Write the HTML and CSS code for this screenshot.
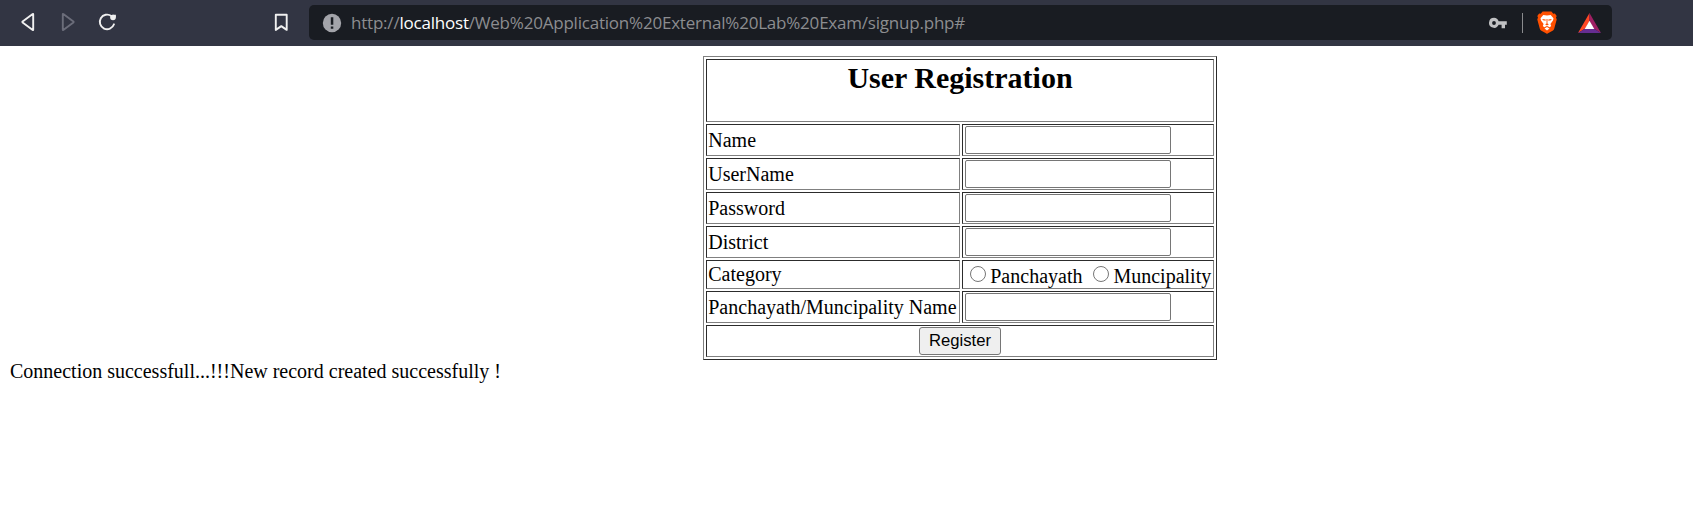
FILE: index.html
```html
<!DOCTYPE html>
<html lang="en">
<head>
<meta charset="utf-8">
<title>User Registration</title>
<link rel="stylesheet" href="styles.css">
</head>
<body>
<header class="toolbar">
  <svg class="ico nav-back" width="24" height="24" viewBox="0 0 24 24"><path d="M17.2 5.3v15.4q0 .5-.5.2L6.600 13.400q-.5-.4 0-.8L16.700 5.100q.5-.3.5.2z"/></svg>
  <svg class="ico nav-forward" width="24" height="24" viewBox="0 0 24 24"><path d="M6.800 5.300v15.400q0 .5.5.2l10.100-7.500q.5-.4 0-.8L7.300 5.100q-.5-.3-.5.2z"/></svg>
  <svg class="ico nav-reload" width="24" height="24" viewBox="0 0 24 24"><path d="M19 15.300A7.300 7.300 0 1 1 16.400 7"/><circle class="fill" cx="18" cy="8.500" r="2.800"/><path class="fill" d="M17.300 5.700h3.600v3z"/></svg>
  <svg class="ico bookmark" width="24" height="24" viewBox="0 0 24 24"><path d="M6.800 5.700h10.900v15.200l-5.400-3.800-5.500 3.800z"/></svg>
  <div class="address">
    <svg class="info" width="20" height="20" viewBox="0 0 20 20"><circle cx="10" cy="10" r="9.2"/><path d="M8.800 4.300h2.500v7.400H8.800zM8.800 13.400h2.500v2.400H8.800z"/></svg>
    <div class="url"><span class="scheme">http://</span><span class="host">localhost</span><span class="path">/Web%20Application%20External%20Lab%20Exam/signup.php#</span></div>
    <svg class="key" width="18" height="12" viewBox="0 0 18 12"><path fill-rule="evenodd" d="M5 .8a5 5 0 1 0 4.600 7h3v3.500H16V7.800h1.800V4.300H9.600A5 5 0 0 0 5 .8zM5 4.100a1.900 1.900 0 1 1 0 3.800 1.900 1.900 0 0 1 0-3.800z"/></svg>
    <span class="divider"></span>
    <svg class="lion" width="20" height="23" viewBox="0 0 20 23"><path fill="#ff5000" d="M5.600.5h8.800l1.900 2.200 1.600-.3 1.800 2.500-.7 1.700.7 2-2.500 9.200q-.3 1-1.200 1.700L10.600 22.600q-.6.4-1.200 0L4 19.500q-.9-.7-1.200-1.700L.3 8.600l.7-2-.7-1.700 1.800-2.500 1.600.3z"/><path fill="#fff" d="M6.300 4l3.700.6 3.700-.6 2.800 3.200-.5 2.300-2.600 3.600.8 2-1.500 1.200-2-1.100-.7-.2-.7.200-2 1.100-1.500-1.200.8-2L4 9.500l-.5-2.300zM7.500 17.500L10 16l2.500 1.500L10 19.500z"/><path fill="#ff5000" d="M5 8l3.600.6.3 1H6.600zM15 8l-3.600.6-.3 1h2.300zM9.500 8h1l-.1 4.600 1.500.6L10 14.500l-1.900-1.300 1.500-.6z"/></svg>
    <svg class="bat" width="23" height="20" viewBox="0 0 23 20"><path fill="#ff4724" d="M11.500 0L0 20l7.300-4.500 4.200-7.300z"/><path fill="#9e1f63" d="M11.500 0L23 20l-7.300-4.500-4.200-7.300z"/><path fill="#662d91" d="M0 20h23l-7.300-4.500H7.300z"/><path fill="#fff" d="M11.500 7.800l4.800 8.200H6.700z"/></svg>
  </div>
</header>
<main class="page">
  <form class="form">
    <div class="cell title"><h2 class="heading">User Registration</h2></div>
    <label class="cell">Name</label><div class="cell field"><input class="text" type="text"></div>
    <label class="cell">UserName</label><div class="cell field"><input class="text" type="text"></div>
    <label class="cell">Password</label><div class="cell field"><input class="text" type="password"></div>
    <label class="cell">District</label><div class="cell field"><input class="text" type="text"></div>
    <label class="cell">Category</label>
    <div class="cell choices"><input class="radio" type="radio" name="cat"><span class="first">Panchayath</span><input class="radio" type="radio" name="cat"><span>Muncipality</span></div>
    <label class="cell">Panchayath/Muncipality Name</label><div class="cell field"><input class="text" type="text"></div>
    <div class="cell submit"><button class="button" type="button">Register</button></div>
  </form>
  <p class="message">Connection successfull...!!!New record created successfully !</p>
</main>
</body>
</html>
```
FILE: styles.css
```css
* { box-sizing: border-box; }
body { margin: 0; background: #fff; color: #000; font: 20px/23px "Liberation Serif", "Times New Roman", serif; }
.toolbar { height: 46px; background: #323543; display: flex; align-items: flex-start; padding: 5px 81px 0 16px; }
.toolbar svg { flex: none; display: block; }
.ico { margin-top: 4px; fill: none; stroke: #f0f0f0; stroke-width: 1.9; stroke-linejoin: round; stroke-linecap: round; }
.ico .fill { fill: #f0f0f0; stroke: none; }
.nav-forward { margin-left: 16px; stroke: #6b6d7a; }
.nav-reload { margin-left: 15px; }
.bookmark { margin-left: 150px; }
.address { flex: 1; margin-left: 16px; height: 35px; border-radius: 5px; background: #191c22; display: flex; align-items: center; padding: 0 11px 0 13px; }
.info { fill: #a3a4aa; }
.info path { fill: #191c22; }
.url { flex: 1; margin-left: 9px; font: 17px/35px "Open Sans", "Noto Sans", sans-serif; letter-spacing: -0.21px; color: #8c8d90; white-space: nowrap; display: flex; }
.host { color: #fff; }
.key { fill: #c0c1c3; }
.divider { width: 1px; height: 20px; background: #8a8b8e; margin: 0 14px 0 15px; }
.bat { margin-left: 21px; }
.page { padding: 10px 10px 0; }
.form { width: 514px; margin: 0 0 0 693px; border: 1px solid; border-color: #808080 #2c2c2c #2c2c2c #808080; padding: 2px; display: grid; grid-template-columns: 254px 252px; grid-template-rows: 63px repeat(4, 32px) 29px 32px 32px; gap: 2px; }
.cell { border: 1px solid; border-color: #2c2c2c #808080 #808080 #2c2c2c; padding: 0 1.25px; display: flex; align-items: center; white-space: nowrap; }
.field { padding: 1px 2px; }
.title { grid-column: 1 / -1; justify-content: center; align-items: flex-start; }
.heading { margin: 0; font-size: 30px; line-height: 35px; font-weight: bold; }
.submit { grid-column: 1 / -1; justify-content: center; }
.text { width: 206px; height: 28px; margin: 0; border: 1px solid #767676; border-radius: 2px; background: #fff; }
.radio { width: 16px; height: 16px; margin: -5px 4px 0 6px; flex: none; }
.choices { padding-top: 4px; }
.first { margin-right: 5px; }
.button { width: 82px; height: 28px; padding: 0; border: 1px solid #767676; border-radius: 3px; background: #efefef; color: #000; font: 16.67px "Liberation Sans", Arial, sans-serif; }
.message { margin: 0; }
```
